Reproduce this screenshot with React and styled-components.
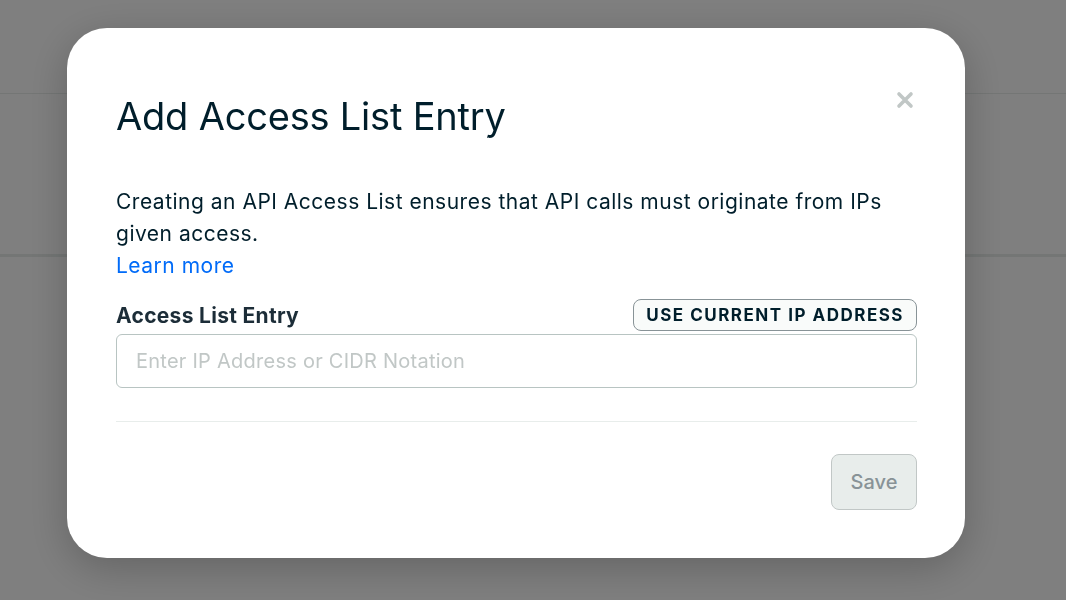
import React from 'react';
import styled, { createGlobalStyle } from 'styled-components';

const GlobalStyle = createGlobalStyle`
	html, body {
		margin: 0;
		padding: 0;
		background: #ffffff;
		font-family: Inter, 'Noto Sans', sans-serif;
		color: #001e2b;
	}
	* {
		box-sizing: border-box;
	}
`;

export default function App() {
	return (
		<>
			<GlobalStyle />
			<Page>
				<PageHeader />
				<PageSection />
			</Page>
			<Overlay>
				<Modal role='dialog' aria-labelledby='modal-title'>
					<CloseButton aria-label='Close modal'>
						<svg width='18' height='18' viewBox='0 0 18 18'>
							<path
								d='M3 3 L15 15 M15 3 L3 15'
								stroke='currentColor'
								strokeWidth='3.6'
								strokeLinecap='round'
							/>
						</svg>
					</CloseButton>
					<Title id='modal-title'>Add Access List Entry</Title>
					<Description>
						Creating an API Access List ensures that API calls must originate from IPs given access.
						<br />
						<LearnMore href='#'>Learn more</LearnMore>
					</Description>
					<FieldHeader>
						<Label htmlFor='entry'>Access List Entry</Label>
						<GhostButton type='button'>Use Current IP Address</GhostButton>
					</FieldHeader>
					<Input id='entry' placeholder='Enter IP Address or CIDR Notation' />
					<Divider />
					<Footer>
						<SaveButton type='button' disabled>
							Save
						</SaveButton>
					</Footer>
				</Modal>
			</Overlay>
		</>
	);
}

const Page = styled.div`
	height: 600px;
	background: #ffffff;
`;

const PageHeader = styled.div`
	height: 94px;
	border-bottom: 1px solid #e8edeb;
`;

const PageSection = styled.div`
	height: 163px;
	border-bottom: 3px solid #e8edeb;
`;

const Overlay = styled.div`
	position: fixed;
	inset: 0;
	background: rgba(0, 0, 0, 0.5);
	padding: 28px 0 0 67px;
`;

const Modal = styled.div`
	position: relative;
	width: 898px;
	height: 530px;
	background: #ffffff;
	border-radius: 40px;
	box-shadow: 0 10px 40px rgba(0, 0, 0, 0.22);
	padding: 64px 48px 48px 49px;
	display: flex;
	flex-direction: column;
`;

const CloseButton = styled.button`
	position: absolute;
	top: 63px;
	right: 51px;
	width: 18px;
	height: 18px;
	padding: 0;
	border: none;
	background: none;
	color: #c1c7c6;
	display: flex;
	align-items: center;
	justify-content: center;
`;

const Title = styled.h1`
	margin: 0;
	font-size: 38px;
	line-height: 48px;
	font-weight: 400;
	letter-spacing: -0.2px;
	color: #001e2b;
`;

const Description = styled.p`
	margin: 46px 0 0;
	font-size: 21px;
	line-height: 32px;
	letter-spacing: 0.5px;
	color: #001e2b;
`;

const LearnMore = styled.a`
	color: #016bf8;
	text-decoration: none;
`;

const FieldHeader = styled.div`
	margin-top: 17px;
	height: 32px;
	display: flex;
	align-items: center;
	justify-content: space-between;
`;

const Label = styled.label`
	font-size: 21px;
	font-weight: 700;
	letter-spacing: 0.3px;
	color: #1c2d38;
`;

const GhostButton = styled.button`
	height: 32px;
	padding: 0 12px;
	border: 1px solid #889397;
	border-radius: 8px;
	background: #f9fbfa;
	font-family: inherit;
	font-size: 17px;
	font-weight: 700;
	letter-spacing: 1.5px;
	text-transform: uppercase;
	color: #001e2b;
`;

const Input = styled.input`
	margin-top: 3px;
	height: 54px;
	width: 100%;
	padding: 0 19px;
	border: 1px solid #b8c4c2;
	border-radius: 6px;
	font-family: inherit;
	font-size: 20px;
	letter-spacing: 0.25px;
	color: #001e2b;
	outline: none;
	&::placeholder {
		color: #c1c7c6;
	}
`;

const Divider = styled.hr`
	margin: 33px 0 0;
	border: none;
	border-top: 1px solid #e8edeb;
`;

const Footer = styled.div`
	margin-top: 32px;
	display: flex;
	justify-content: flex-end;
`;

const SaveButton = styled.button`
	height: 56px;
	width: 86px;
	border: 1px solid #c1c7c6;
	border-radius: 8px;
	background: #e8edeb;
	font-family: inherit;
	font-size: 20px;
	font-weight: 500;
	color: #889397;
`;
